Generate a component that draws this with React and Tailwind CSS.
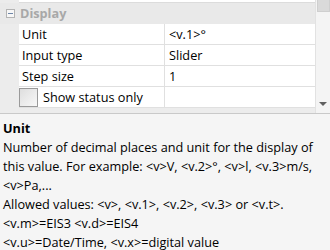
import React from "react";

const rows = [
  { name: "Unit", value: "<v.1>°" },
  { name: "Input type", value: "Slider" },
  { name: "Step size", value: "1" },
];

const descLines = [
  "Number of decimal places and unit for the display of",
  "this value. For example: <v>V, <v.2>°, <v>l, <v.3>m/s,",
  "<v>Pa,...",
  "Allowed values: <v>, <v.1>, <v.2>, <v.3> or <v.t>.",
  "<v.m>=EIS3 <v.d>=EIS4",
  "<v.u>=Date/Time, <v.x>=digital value",
];

export default function App() {
  return (
    <div
      className="w-[330px] h-[250px] overflow-hidden bg-[#f0f0f0] text-[12.7px] text-black flex flex-col"
      style={{ fontFamily: '"Open Sans", "Noto Sans", sans-serif' }}
    >
      {/* property grid */}
      <div className="flex h-[113px] shrink-0">
        <div className="w-[315px] flex flex-col bg-[#ececec]">
          {/* tail of the previous section */}
          <div className="h-[3px] flex">
            <div className="w-[19px]" />
            <div className="flex-1 bg-white border-b border-[#dcdcdc]" />
          </div>

          {/* category header */}
          <div className="h-[21px] flex items-center bg-[#e9e9e9]">
            <div className="w-[19px] flex justify-center pl-[1px]">
              <div className="w-[9px] h-[9px] border border-[#b4b4b4] bg-[#f7f7f7] flex items-center justify-center">
                <div className="w-[5px] h-[1px] bg-[#6e86a8]" />
              </div>
            </div>
            <span className="font-bold text-[#a8a8a8] pl-[1px]">Display</span>
          </div>

          {rows.map((r) => (
            <div key={r.name} className="h-[21px] flex">
              <div className="w-[19px] bg-[#ececec]" />
              <div className="w-[146px] bg-white border-b border-r border-[#e0e0e0] flex items-center pl-[3px] leading-none">
                {r.name}
              </div>
              <div className="flex-1 bg-white border-b border-[#e0e0e0] flex items-center pl-[4px] leading-none">
                {r.value}
              </div>
            </div>
          ))}

          <div className="h-[21px] flex">
            <div className="w-[19px] bg-[#ececec]" />
            <div className="w-[146px] bg-white border-b border-r border-[#e0e0e0] flex items-center leading-none">
              <div className="w-[19px] h-[19px] border border-[#9a9a9a] bg-gradient-to-br from-[#dedede] to-[#f8f8f8] mr-[5px]" />
              Show status only
            </div>
            <div className="flex-1 bg-white border-b border-[#e0e0e0]" />
          </div>
        </div>

        {/* scrollbar */}
        <div className="w-[15px] bg-[#f4f4f4] border-l border-[#e2e2e2] flex flex-col justify-between items-center">
          <div className="w-[13px] h-[12px] bg-[#dadada] border border-[#cfcfcf] border-t-0" />
          <div className="mb-[7px] w-0 h-0 border-l-[4px] border-r-[4px] border-t-[4px] border-l-transparent border-r-transparent border-t-[#606060]" />
        </div>
      </div>

      {/* splitter */}
      <div className="h-[3px] bg-[#f0f0f0] border-b border-[#c9c9c9]" />

      {/* description */}
      <div className="flex-1 bg-[#f5f5f5] px-[3px] pt-[5px] leading-[19px]">
        <div className="font-bold">Unit</div>
        {descLines.map((l) => (
          <div key={l} className="whitespace-pre">{l}</div>
        ))}
      </div>
    </div>
  );
}
